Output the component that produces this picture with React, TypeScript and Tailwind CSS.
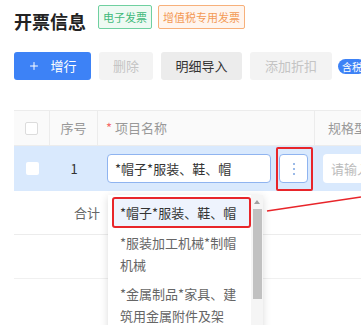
import { Plus } from 'lucide-react';

function App() {
  const items = [
    '*服装加工机械*制帽机械',
    '*金属制品*家具、建筑用金属附件及架',
  ];

  return (
    <div
      className="relative w-[361px] h-[325px] overflow-hidden bg-white text-[#333]"
      style={{ fontFamily: '"Noto Sans CJK SC", "Noto Sans", sans-serif' }}
    >
      {/* title */}
      <div className="flex items-start gap-[12px] pl-[14px] pt-[5px] h-[40px]">
        <div className="mt-[4px] text-[18px] leading-[24px] font-bold text-[#222]">开票信息</div>
        <div className="flex gap-[6px]">
          <span className="h-[24px] px-[4px] flex items-center border border-[#6fd0a0] bg-[#eefaf3] text-[#3fb97a] text-[11px] rounded-[2px]">
            电子发票
          </span>
          <span className="h-[24px] px-[4px] flex items-center border border-[#f7b07a] bg-[#fff5ee] text-[#f39a55] text-[11px] rounded-[2px]">
            增值税专用发票
          </span>
        </div>
      </div>

      {/* toolbar */}
      <div className="flex items-center gap-[8px] pl-[14px] mt-[12px] h-[28px] whitespace-nowrap">
        <button className="shrink-0 w-[77px] h-[28px] rounded-[3px] bg-[#3d82f6] text-white text-[13px] flex items-center justify-center gap-[10px]">
          <Plus size={12} strokeWidth={2} />
          增行
        </button>
        <button className="shrink-0 w-[54px] h-[28px] rounded-[3px] bg-[#f3f3f3] text-[#c4c4c4] text-[13px]">删除</button>
        <button className="shrink-0 w-[81px] h-[28px] rounded-[3px] bg-[#ececec] text-[#333] text-[13px]">明细导入</button>
        <button className="shrink-0 w-[82px] h-[28px] rounded-[3px] bg-[#f3f3f3] text-[#c4c4c4] text-[13px]">添加折扣</button>
        <span className="shrink-0 ml-[-2px] h-[15px] px-[4px] rounded-full bg-[#3d82f6] text-white text-[10px] leading-[15px]">含税</span>
      </div>

      {/* table */}
      <div className="ml-[14px] mt-[30px] w-[400px] text-[13px]">
        <div className="flex h-[36px] bg-[#fafafa] border-y border-[#ececec] text-[#999]">
          <div className="w-[36px] flex items-center justify-center border-r border-[#ececec]">
            <span className="w-[13px] h-[13px] border border-[#dcdcdc] bg-white rounded-[2px]" />
          </div>
          <div className="w-[48px] flex items-center justify-center border-r border-[#ececec]">序号</div>
          <div className="w-[217px] flex items-center pl-[8px] border-r border-[#ececec]">
            <span className="text-[#f56c6c] mr-[3px]">*</span>项目名称
          </div>
          <div className="flex-1 flex items-center pl-[13px]">规格型号</div>
        </div>

        <div className="flex h-[45px] bg-[#d9e9fd] items-center">
          <div className="w-[36px] flex justify-center">
            <span className="w-[13px] h-[13px] bg-white rounded-[2px]" />
          </div>
          <div className="w-[48px] text-center text-[#333]">1</div>
          <div className="w-[217px] flex items-center pl-[9px] gap-[8px]">
            <div className="w-[164px] h-[29px] border border-[#8fb4f0] bg-white rounded-[4px] pl-[7px] flex items-center text-[#333]">
              *帽子*服装、鞋、帽
            </div>
            <div className="relative w-[29px] h-[29px] border border-[#8fb4f0] bg-white rounded-[4px] flex flex-col items-center justify-center gap-[3px]">
              <span className="w-[2px] h-[2px] rounded-full bg-[#7aa3e0]" />
              <span className="w-[2px] h-[2px] rounded-full bg-[#7aa3e0]" />
              <span className="w-[2px] h-[2px] rounded-full bg-[#7aa3e0]" />
              <span className="absolute left-[-4px] top-[-8px] w-[37px] h-[44px] border-2 border-[#e8252a] rounded-[2px]" />
            </div>
          </div>
          <div className="ml-[8px] w-[80px] h-[29px] bg-white rounded-[4px] pl-[8px] flex items-center text-[#bbb]">请输入</div>
        </div>

        <div className="flex h-[44px] border-b border-[#ececec] items-center">
          <div className="w-[84px] text-right text-[#666]">
            <span className="mr-[-2px]">合计</span>
          </div>
        </div>
        <div className="h-[44px] border-b border-[#f0f0f0]" />
      </div>

      {/* dropdown */}
      <div className="absolute left-[108px] top-[195px] w-[155px] h-[140px] bg-white shadow-[0_2px_8px_rgba(0,0,0,0.15)] flex">
        <div className="flex-1 pl-[4px] pt-[2px] text-[13px] leading-[22px] text-[#666]">
          <div className="h-[31px] border-2 border-[#e8252a] rounded-[3px] bg-[#eef3fd] flex items-center pl-[6px] text-[#333] whitespace-nowrap">
            *帽子*服装、鞋、帽
          </div>
          {items.map((t) => (
            <div key={t} className="px-[8px] py-[3px] mt-[1px]">{t}</div>
          ))}
        </div>
        <div className="w-[12px] bg-[#f5f5f5] flex flex-col items-center">
          <span className="mt-[5px] w-0 h-0 border-l-[3px] border-r-[3px] border-b-[4px] border-l-transparent border-r-transparent border-b-[#a0a0a0]" />
          <span className="mt-[5px] w-[9px] h-[90px] bg-[#c1c1c1]" />
        </div>
      </div>

      {/* callout line */}
      <svg className="absolute left-0 top-0 pointer-events-none" width="361" height="325">
        <line x1="267" y1="211" x2="361" y2="197" stroke="#e8252a" strokeWidth="1.5" />
      </svg>
    </div>
  );
}

export default App;
